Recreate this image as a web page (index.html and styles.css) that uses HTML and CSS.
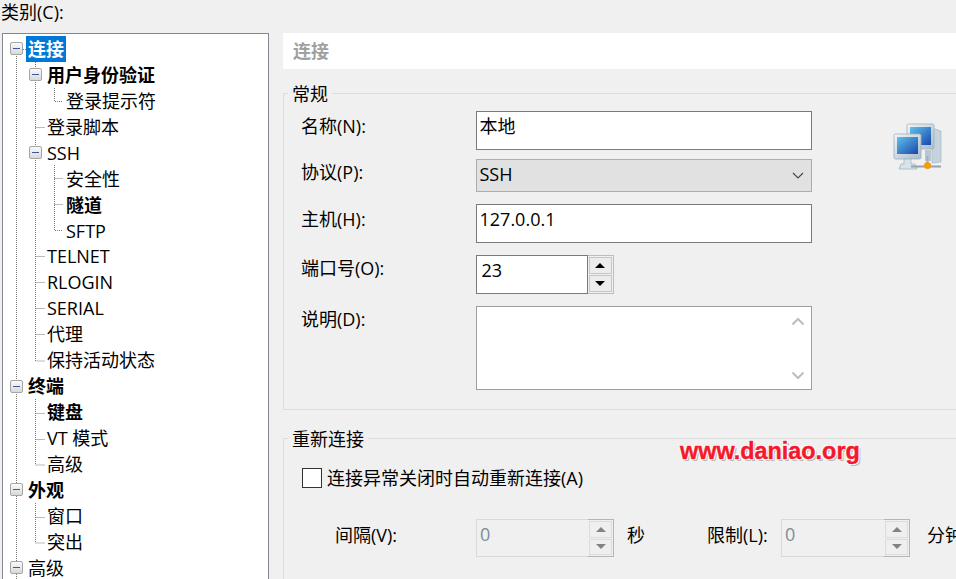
FILE: index.html
```html
<!DOCTYPE html>
<html lang="zh-CN">
<head>
<meta charset="utf-8">
<title>连接</title>
<link rel="stylesheet" href="styles.css">
</head>
<body>
<div class="dialog">
  <div class="cat-label">类别(C):</div>
  <div class="columns">
    <div class="tree">
      <svg class="tree-lines" viewBox="3 34 266 545" width="266" height="545" aria-hidden="true">
        <g class="dots">
          <path d="M16.5 56V579"/>
          <path d="M23 49.5H26"/>
          <path d="M35.5 62V361H45"/>
          <path d="M54.5 88V101.5H63"/>
          <path d="M35.5 127.5H45"/>
          <path d="M35.5 256.5H45M35.5 282.5H45M35.5 308.5H45M35.5 334.5H45"/>
          <path d="M54.5 165V230.5H63M54.5 178.5H63M54.5 204.5H63"/>
          <path d="M35.5 399V465H45M35.5 413.5H45M35.5 439.5H45"/>
          <path d="M35.5 503V543H45M35.5 517.5H45"/>
        </g>
      </svg>
      <div class="row l0"><span class="exp"></span><span class="sel">连接</span></div>
      <div class="row l1"><span class="exp"></span><b class="node">用户身份验证</b></div>
      <div class="row l2"><span class="node">登录提示符</span></div>
      <div class="row l1 leaf"><span class="node">登录脚本</span></div>
      <div class="row l1"><span class="exp"></span><span class="node">SSH</span></div>
      <div class="row l2"><span class="node">安全性</span></div>
      <div class="row l2"><b class="node">隧道</b></div>
      <div class="row l2"><span class="node">SFTP</span></div>
      <div class="row l1 leaf"><span class="node">TELNET</span></div>
      <div class="row l1 leaf"><span class="node">RLOGIN</span></div>
      <div class="row l1 leaf"><span class="node">SERIAL</span></div>
      <div class="row l1 leaf"><span class="node">代理</span></div>
      <div class="row l1 leaf"><span class="node">保持活动状态</span></div>
      <div class="row l0"><span class="exp"></span><b class="node">终端</b></div>
      <div class="row l1 leaf"><b class="node">键盘</b></div>
      <div class="row l1 leaf"><span class="node">VT 模式</span></div>
      <div class="row l1 leaf"><span class="node">高级</span></div>
      <div class="row l0"><span class="exp"></span><b class="node">外观</b></div>
      <div class="row l1 leaf"><span class="node">窗口</span></div>
      <div class="row l1 leaf"><span class="node">突出</span></div>
      <div class="row l0"><span class="exp"></span><span class="node">高级</span></div>
    </div>

    <div class="panel">
      <div class="panel-title">连接</div>

      <section class="group group-general">
        <div class="legend">常规</div>
        <div class="form-row row-name">
          <label class="flabel">名称(N):</label>
          <div class="input wide tall">本地</div>
        </div>
        <div class="form-row row-proto">
          <label class="flabel short">协议(P):</label>
          <div class="combo wide">SSH
            <svg class="chev" width="12" height="7" viewBox="0 0 12 7" aria-hidden="true"><path d="M1 1l5 5 5-5" fill="none" stroke="#444" stroke-width="1.1"/></svg>
          </div>
        </div>
        <div class="form-row row-host">
          <label class="flabel">主机(H):</label>
          <div class="input wide tall">127.0.0.1</div>
        </div>
        <div class="form-row row-port">
          <label class="flabel short">端口号(O):</label>
          <div class="spin">
            <div class="input spin-field">23</div>
            <div class="spin-btns">
              <span class="sbtn"><i class="up"></i></span>
              <span class="sbtn"><i class="down"></i></span>
            </div>
          </div>
        </div>
        <div class="form-row row-desc">
          <label class="flabel short">说明(D):</label>
          <div class="input wide memo">
            <svg class="memo-arrow" width="14" height="9" viewBox="0 0 14 9" aria-hidden="true"><path d="M1.5 7.5L7 2l5.500 5.500" fill="none" stroke="#bdbdbd" stroke-width="2"/></svg>
            <svg class="memo-arrow" width="14" height="9" viewBox="0 0 14 9" aria-hidden="true"><path d="M1.500 1.500L7 7l5.500-5.500" fill="none" stroke="#bdbdbd" stroke-width="2"/></svg>
          </div>
        </div>
        <svg class="net-icon" width="52" height="52" viewBox="0 0 52 52" aria-hidden="true">
          <defs>
            <linearGradient id="scr" x1="0" y1="0" x2="1" y2="1"><stop offset="0" stop-color="#63c1ea"/><stop offset="1" stop-color="#1746ad"/></linearGradient>
            <linearGradient id="frm" x1="0" y1="0" x2="1" y2="1"><stop offset="0" stop-color="#f2f6f9"/><stop offset="1" stop-color="#a9bcc9"/></linearGradient>
          </defs>
          <path d="M39 5l9 3v31l-9 1z" fill="#c5d3dd" stroke="#9fb2bf" stroke-width=".6"/>
          <rect x="14" y="1" width="27" height="25" rx="1.500" fill="url(#frm)" stroke="#9db1bf" stroke-width=".8"/>
          <rect x="17" y="4" width="21" height="18" fill="url(#scr)"/>
          <path d="M32 27h6v11h-6z" fill="#b6c7d2"/>
          <rect x="1" y="11" width="27" height="25" rx="1.500" fill="url(#frm)" stroke="#9db1bf" stroke-width=".8"/>
          <rect x="4" y="14" width="21" height="17" fill="url(#scr)"/>
          <path d="M11 36h7v5h4l2 5H6l2-5h3z" fill="#d8e2e9" stroke="#9fb2bf" stroke-width=".7"/>
          <path d="M18 43.500h30" stroke="#8fa3b1" stroke-width="2"/>
          <path d="M34.500 33v7" stroke="#9fb2bf" stroke-width="2"/>
          <circle cx="34.500" cy="42.500" r="3.500" fill="#f29a12"/>
        </svg>
      </section>

      <section class="group group-reconnect">
        <div class="legend">重新连接</div>
        <div class="check-row">
          <span class="checkbox"></span>
          <span>连接异常关闭时自动重新连接(A)</span>
        </div>
        <div class="retry-row">
          <label class="retry-label">间隔(V):</label>
          <div class="dis-spin dis-a">
            <div class="dis-field">0</div>
            <div class="spin-btns dis-btns">
              <span class="sbtn"><i class="up"></i></span>
              <span class="sbtn"><i class="down"></i></span>
            </div>
          </div>
          <span class="unit-a">秒</span>
          <label class="limit-label">限制(L):</label>
          <div class="dis-spin dis-b">
            <div class="dis-field">0</div>
            <div class="spin-btns dis-btns">
              <span class="sbtn"><i class="up"></i></span>
              <span class="sbtn"><i class="down"></i></span>
            </div>
          </div>
          <span class="unit-b">分钟</span>
        </div>
      </section>
    </div>
  </div>
  <div class="watermark">www.daniao.org</div>
</div>
</body>
</html>
```
FILE: styles.css
```css
* { box-sizing: border-box; }
html, body { margin: 0; height: 100%; overflow: hidden; }
body {
  background: #f0f0f0;
  color: #000;
  font: 18px/26px "Open Sans", "Noto Sans CJK SC", sans-serif;
}
.dialog { position: relative; width: 956px; height: 579px; overflow: hidden; }
.cat-label { height: 33px; padding-left: 1px; line-height: 25px; }
.columns { display: flex; align-items: flex-start; }

/* tree */
.tree {
  position: relative;
  flex: none;
  width: 267px;
  height: 560px;
  margin-left: 2px;
  padding-top: 2px;
  background: #fff;
  border: 1px solid #828790;
}
.tree-lines { position: absolute; left: 0; top: 0; }
.dots path { fill: none; stroke: #777; stroke-dasharray: 1 1; }
.row { position: relative; display: flex; align-items: center; height: 25.950px; }
.l0 { padding-left: 7px; }
.l1 { padding-left: 26px; }
.l2 { padding-left: 63px; }
.leaf { padding-left: 44px; }
.exp {
  flex: none;
  position: relative;
  width: 13px;
  height: 13px;
  margin-right: 5px;
  background: linear-gradient(#fafafa, #d9d9d9);
  border: 1px solid #a6a6a6;
  border-radius: 2px;
}
.exp::after {
  content: "";
  position: absolute;
  left: 2px;
  right: 2px;
  top: 5px;
  height: 1px;
  background: #3b5a9c;
}
.sel {
  margin-left: -2px;
  padding: 0 2px;
  background: #0078d7;
  color: #fff;
  font-weight: 700;
}
b.node { font-weight: 700; }

/* panel */
.panel { flex: none; width: 700px; margin-left: 14px; }
.panel-title {
  height: 36px;
  padding-left: 10px;
  background: #fff;
  color: #a0a0a0;
  font-weight: 700;
  line-height: 36px;
}
.group { position: relative; border: 1px solid #dcdcdc; }
.group-general { height: 317px; margin-top: 24px; padding: 17px 0 0 17px; }
.group-reconnect { height: 200px; margin-top: 28px; padding: 0 0 0 18px; }
.legend {
  position: absolute;
  left: 4px;
  top: -13px;
  padding: 0 4px;
  background: #f0f0f0;
  line-height: 26px;
}
.form-row { display: flex; align-items: flex-start; }
.flabel { flex: none; width: 174.500px; line-height: 30px; }
.flabel.short { line-height: 26px; }
.row-name { height: 48px; }
.row-proto { height: 45px; }
.row-host { height: 51px; }
.row-port { height: 51px; }
.input {
  background: #fff;
  border: 1px solid #7a7a7a;
  padding: 0 3px;
}
.wide { width: 336px; }
.tall { height: 39px; line-height: 29px; }
.combo {
  position: relative;
  height: 33px;
  padding: 0 3px;
  background: #e1e1e1;
  border: 1px solid #adadad;
  line-height: 28px;
}
.chev { position: absolute; right: 7px; top: 12px; }
.spin { display: flex; height: 39px; width: 138px; }
.spin-field { width: 112px; height: 39px; line-height: 28px; padding-left: 5px; }
.spin-btns {
  display: flex;
  flex-direction: column;
  gap: 1px;
  width: 26px;
  padding: 1px;
  border: 1px solid #bdbdbd;
  border-left: 0;
}
.sbtn {
  flex: 1;
  display: flex;
  align-items: center;
  justify-content: center;
  background: #ececec;
  border: 1px solid #c6c6c6;
}
.up, .down { width: 0; height: 0; border: 4.500px solid transparent; border-left-width: 5px; border-right-width: 5px; }
.up { border-top: 0; border-bottom: 5px solid #000; }
.down { border-bottom: 0; border-top: 5px solid #000; }
.memo {
  height: 84px;
  display: flex;
  flex-direction: column;
  justify-content: space-between;
  align-items: flex-end;
  padding: 10px 6px 9px 0;
  border-color: #a0a0a0;
}
.net-icon { position: absolute; left: 609px; top: 29px; }

.check-row { display: flex; align-items: center; height: 26px; margin: 26px 0 0 0; }
.checkbox {
  flex: none;
  width: 20px;
  height: 20px;
  margin-right: 5px;
  background: #fff;
  border: 1px solid #333;
}
.retry-row { display: flex; align-items: flex-start; height: 38px; margin: 28px 0 0 33px; line-height: 32px; }
.retry-label { flex: none; width: 141px; }
.dis-spin { flex: none; display: flex; height: 38px; }
.dis-a { width: 138px; }
.dis-b { width: 129px; }
.dis-field {
  flex: 1;
  padding-left: 3px;
  color: #7f8c99;
  border: 1px solid #d9d9d9;
  border-right: 0;
  line-height: 28px;
}
.dis-btns { border-color: #b5b5b5; border-left: 0; }
.dis-btns .sbtn { background: #efefef; border-color: #dcdcdc; }
.dis-btns .up { border-bottom-color: #838383; }
.dis-btns .down { border-top-color: #838383; }
.unit-a { flex: none; width: 80px; margin-left: 13px; }
.limit-label { flex: none; width: 74px; }
.unit-b { flex: none; margin-left: 17px; white-space: nowrap; }

.watermark {
  position: absolute;
  left: 680px;
  top: 437px;
  color: #f4182d;
  font: 700 23.400px/28px "Liberation Sans", sans-serif;
  -webkit-text-stroke: 0.4px #f4182d;
  text-shadow: 1px 1px 0 #fff, -1px -1px 0 #fff, 1px -1px 0 #fff, -1px 1px 0 #fff, 2px 2px 0 #b9b9b9;
}
```
